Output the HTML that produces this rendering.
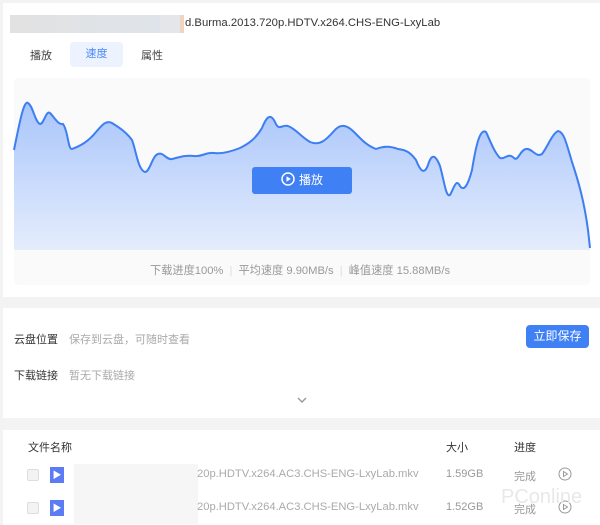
<!DOCTYPE html>
<html><head><meta charset="utf-8"><style>
*{margin:0;padding:0;box-sizing:border-box}
body{width:600px;height:525px;background:#f3f3f3;font-family:"Liberation Sans","Noto Sans CJK SC",sans-serif;position:relative;overflow:hidden;font-size:11px;color:#333}
.card{position:absolute;background:#fff;left:3px;right:0}
.abs{position:absolute}
</style></head><body>
<div class="card" style="top:3px;height:294px">
  <div class="abs" style="left:7px;top:12px;width:150px;height:18px;background:linear-gradient(90deg,#e2e2e2,#dfe4ea)"></div>
  <div class="abs" style="left:157px;top:12px;width:20px;height:18px;background:#e4e6ea"></div>
  <div class="abs" style="left:177px;top:12px;width:4px;height:18px;background:#efd5c0"></div>
  <div class="abs" style="left:182px;top:14px;font-size:11.3px;color:#333">d.Burma.2013.720p.HDTV.x264.CHS-ENG-LxyLab</div>
  <div class="abs" style="left:27px;top:44px;color:#444;font-size:11px">播放</div>
  <div class="abs" style="left:67px;top:39px;width:53px;height:25px;background:#edf3fe;border-radius:4px;color:#4a88f7;text-align:center;line-height:25px">速度</div>
  <div class="abs" style="left:138px;top:44px;color:#444">属性</div>
  <div class="abs" style="left:11px;top:75px;width:576px;height:207px;background:#fafafa;border-radius:4px"></div>
</div>
<svg class="abs" style="left:0;top:0" width="600" height="260">
<defs><linearGradient id="g" x1="0" y1="0" x2="0" y2="1"><stop offset="0" stop-color="#a9c5fb"/><stop offset="1" stop-color="#e5edfc"/></linearGradient></defs>
<path d="M14,150 C20,120 24,100 28,103 C33,106 35,122 40,124 C44,124 46,110 50,113 C55,118 58,125 63,124 C68,130 68,150 72,149 C80,146 88,142 96,132 C102,125 106,120 112,123 C120,128 126,132 132,140 C136,150 138,170 145,172 C150,172 152,156 158,154 C164,152 166,160 172,159 C180,157 186,155 194,156 C202,157 206,152 214,153 C222,154 230,152 240,148 C250,143 256,138 262,128 C266,118 270,112 275,122 C279,132 282,124 288,126 C296,129 300,136 310,142 C320,146 326,140 334,131 C340,124 346,124 354,132 C362,140 366,145 376,149 C384,146 390,146 398,149 C406,150 410,152 416,160 C420,170 424,176 428,165 C432,152 436,156 440,166 C444,180 446,198 450,195 C454,188 456,178 460,186 C464,192 468,185 472,170 C476,145 480,128 486,132 C490,140 494,152 500,158 C505,160 508,152 514,158 C518,162 520,150 526,149 C532,148 536,158 542,154 C548,146 552,134 558,131 C564,132 566,142 572,162 C578,180 584,200 588,230 L590,248 L590,250 L14,250 Z" fill="url(#g)" stroke="none"/>
<path d="M14,150 C20,120 24,100 28,103 C33,106 35,122 40,124 C44,124 46,110 50,113 C55,118 58,125 63,124 C68,130 68,150 72,149 C80,146 88,142 96,132 C102,125 106,120 112,123 C120,128 126,132 132,140 C136,150 138,170 145,172 C150,172 152,156 158,154 C164,152 166,160 172,159 C180,157 186,155 194,156 C202,157 206,152 214,153 C222,154 230,152 240,148 C250,143 256,138 262,128 C266,118 270,112 275,122 C279,132 282,124 288,126 C296,129 300,136 310,142 C320,146 326,140 334,131 C340,124 346,124 354,132 C362,140 366,145 376,149 C384,146 390,146 398,149 C406,150 410,152 416,160 C420,170 424,176 428,165 C432,152 436,156 440,166 C444,180 446,198 450,195 C454,188 456,178 460,186 C464,192 468,185 472,170 C476,145 480,128 486,132 C490,140 494,152 500,158 C505,160 508,152 514,158 C518,162 520,150 526,149 C532,148 536,158 542,154 C548,146 552,134 558,131 C564,132 566,142 572,162 C578,180 584,200 588,230 L590,248" fill="none" stroke="#3d7ef3" stroke-width="2"/>
</svg>
<div class="abs" style="left:252px;top:167px;width:100px;height:27px;background:#3f80f5;border-radius:3px;color:#fff;font-size:12px;line-height:27px;text-align:center">
<svg width="14" height="14" style="vertical-align:-2px;margin-right:4px" viewBox="0 0 14 14"><circle cx="7" cy="7" r="6" fill="none" stroke="#fff" stroke-width="1.5"/><path d="M5.5,4.3 L9.8,7 L5.5,9.7Z" fill="#fff"/></svg>播放</div>
<div class="abs" style="left:150px;top:262px;color:#999;font-size:11.2px">下载进度100% <span style="color:#ddd;margin:0 3px">|</span> 平均速度 9.90MB/s <span style="color:#ddd;margin:0 3px">|</span> 峰值速度 15.88MB/s</div>

<div class="card" style="top:308px;height:110px">
  <div class="abs" style="left:11px;top:23px;color:#333">云盘位置</div>
  <div class="abs" style="left:66px;top:23px;color:#aaa">保存到云盘，可随时查看</div>
  <div class="abs" style="left:523px;top:17px;width:63px;height:23px;background:#3f80f5;border-radius:4px;color:#fff;text-align:center;line-height:23px;font-size:12px">立即保存</div>
  <div class="abs" style="left:11px;top:59px;color:#333">下载链接</div>
  <div class="abs" style="left:66px;top:59px;color:#aaa">暂无下载链接</div>
  <svg class="abs" style="left:293px;top:88px" width="12" height="8"><path d="M2,2 L6,6 L10,2" fill="none" stroke="#999" stroke-width="1.4"/></svg>
</div>

<div class="card" style="top:430px;height:95px">
  <div class="abs" style="left:25px;top:9px;color:#333">文件名称</div>
  <div class="abs" style="left:443px;top:9px;color:#333">大小</div>
  <div class="abs" style="left:511px;top:9px;color:#333">进度</div>
  <div class="abs" style="left:24px;top:39px;width:12px;height:12px;border:1px solid #ddd;border-radius:2px;background:#f3f3f3"></div>
  <div class="abs" style="left:47px;top:37px;width:14px;height:16px;background:#5b7cf5;color:#fff;font-size:9px;text-align:center;line-height:16px">▶</div>
  <div class="abs" style="left:71px;top:34px;width:124px;height:60px;background:#f6f6f6"></div>
  <div class="abs" style="left:194px;top:38px;color:#aaa;font-size:11.2px">20p.HDTV.x264.AC3.CHS-ENG-LxyLab.mkv</div>
  <div class="abs" style="left:443px;top:38px;color:#999">1.59GB</div>
  <div class="abs" style="left:511px;top:38px;color:#999">完成</div>
  <svg class="abs" style="left:555px;top:37px" width="14" height="14"><circle cx="7" cy="7" r="6" fill="none" stroke="#999"/><path d="M5.5,4.5 L9.5,7 L5.5,9.5Z" fill="none" stroke="#999"/></svg>
  <div class="abs" style="left:24px;top:72px;width:12px;height:12px;border:1px solid #ddd;border-radius:2px;background:#f3f3f3"></div>
  <div class="abs" style="left:47px;top:70px;width:14px;height:16px;background:#5b7cf5;color:#fff;font-size:9px;text-align:center;line-height:16px">▶</div>
  <div class="abs" style="left:194px;top:71px;color:#aaa;font-size:11.2px">20p.HDTV.x264.AC3.CHS-ENG-LxyLab.mkv</div>
  <div class="abs" style="left:443px;top:71px;color:#999">1.52GB</div>
  <div class="abs" style="left:511px;top:71px;color:#999">完成</div>
  <svg class="abs" style="left:555px;top:70px" width="14" height="14"><circle cx="7" cy="7" r="6" fill="none" stroke="#999"/><path d="M5.5,4.5 L9.5,7 L5.5,9.5Z" fill="none" stroke="#999"/></svg>
  <div class="abs" style="left:498px;top:56px;color:#e8e8e8;font-size:20px">PConline</div>
</div>
</body></html>
